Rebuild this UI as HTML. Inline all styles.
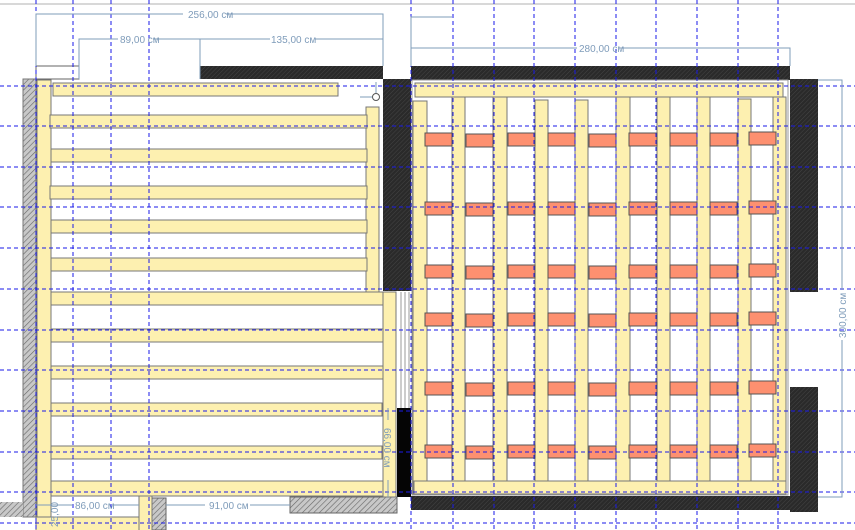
<!DOCTYPE html>
<html><head><meta charset="utf-8"><style>
html,body{margin:0;padding:0;background:#fff;width:855px;height:530px;overflow:hidden}
svg{display:block}
text{font-family:"Liberation Sans",sans-serif;font-size:10px;fill:#7f9cba}
</style></head><body>
<svg width="855" height="530" viewBox="0 0 855 530">
<defs>
<pattern id="dk" width="3" height="3" patternUnits="userSpaceOnUse" patternTransform="rotate(45)"><rect width="3" height="3" fill="#2a2a2a"/><line x1="0" y1="0" x2="0" y2="3" stroke="#444" stroke-width="1"/></pattern>
<pattern id="gr" width="4" height="4" patternUnits="userSpaceOnUse" patternTransform="rotate(45)"><rect width="4" height="4" fill="#c8c8c8"/><line x1="0" y1="0" x2="0" y2="4" stroke="#666" stroke-width="1.2"/></pattern>
</defs>
<line x1="0" y1="4" x2="855" y2="4" stroke="#ccc" stroke-width="1.5"/>
<rect x="36" y="66" width="43" height="13" fill="#fff" stroke="#666"/>
<rect x="200" y="66" width="183" height="13" fill="url(#dk)"/>
<rect x="383" y="79" width="28" height="212" fill="url(#dk)"/>
<rect x="411" y="66" width="379" height="14" fill="url(#dk)"/>
<rect x="790" y="79" width="28" height="213" fill="url(#dk)"/>
<rect x="790" y="387" width="28" height="125" fill="url(#dk)"/>
<rect x="411" y="496" width="379" height="14" fill="url(#dk)"/>
<rect x="397" y="408" width="14" height="89" fill="#050505"/>
<rect x="23" y="79" width="13" height="438" fill="url(#gr)" stroke="#777"/>
<rect x="0" y="502" width="23" height="15" fill="url(#gr)"/>
<rect x="152" y="498" width="14" height="32" fill="url(#gr)" stroke="#666"/>
<rect x="290" y="497" width="107" height="16" fill="url(#gr)" stroke="#666"/>
<g fill="#fdf0b0" stroke="#777" stroke-width="1">
<rect x="37" y="80" width="14" height="437"/>
<rect x="36" y="517" width="103" height="14"/>
<rect x="139" y="495" width="13" height="36"/>
<rect x="53" y="83" width="285" height="13"/>
<rect x="366" y="107" width="13" height="185"/>
<rect x="50" y="115" width="317" height="13"/>
<rect x="51" y="149" width="316" height="13"/>
<rect x="50" y="186" width="317" height="13"/>
<rect x="51" y="220" width="316" height="13"/>
<rect x="51" y="258" width="316" height="13"/>
<rect x="51" y="292" width="332" height="13"/>
<rect x="51" y="329" width="332" height="13"/>
<rect x="51" y="366" width="332" height="13"/>
<rect x="51" y="403" width="331" height="13"/>
<rect x="51" y="446" width="331" height="13"/>
<rect x="51" y="481" width="332" height="15"/>
<rect x="383" y="292" width="13" height="205"/>
</g>
<line x1="401" y1="292" x2="401" y2="408" stroke="#999"/>
<line x1="405" y1="292" x2="405" y2="408" stroke="#999"/>
<line x1="409" y1="292" x2="409" y2="408" stroke="#999"/>
<rect x="412" y="80" width="376" height="415" fill="#fff" stroke="#999"/>
<g fill="#fdf0b0" stroke="#777">
<rect x="413" y="101" width="14" height="393"/>
<rect x="452" y="97" width="13" height="397"/>
<rect x="493" y="97" width="14" height="397"/>
<rect x="535" y="100" width="13" height="394"/>
<rect x="575" y="100" width="13" height="394"/>
<rect x="616" y="97" width="14" height="397"/>
<rect x="657" y="97" width="13" height="397"/>
<rect x="697" y="97" width="13" height="397"/>
<rect x="738" y="99" width="13" height="395"/>
<rect x="773" y="97" width="13" height="397"/>
<rect x="415" y="83" width="368" height="14"/>
<rect x="414" y="481" width="372" height="13"/>
</g>
<g fill="#fd9070" stroke="#555">
<g id="row">
<rect x="425" y="133" width="27" height="13"/><rect x="466" y="134" width="27" height="13"/><rect x="508" y="133" width="27" height="13"/><rect x="548" y="133" width="27" height="13"/><rect x="589" y="134" width="27" height="13"/><rect x="629" y="133" width="28" height="13"/><rect x="670" y="133" width="27" height="13"/><rect x="710" y="133" width="27" height="13"/><rect x="749" y="132" width="27" height="13"/>
</g>
<use href="#row" y="69"/><use href="#row" y="132"/><use href="#row" y="180"/><use href="#row" y="249"/><use href="#row" y="312"/>
</g>
<g stroke="#1a1ae8" stroke-width="1" stroke-dasharray="4,3">
<line x1="0" y1="86" x2="855" y2="86"/><line x1="0" y1="126" x2="855" y2="126"/><line x1="0" y1="167" x2="855" y2="167"/><line x1="0" y1="207" x2="855" y2="207"/><line x1="0" y1="248" x2="855" y2="248"/><line x1="0" y1="289" x2="855" y2="289"/><line x1="0" y1="330" x2="855" y2="330"/><line x1="0" y1="370" x2="855" y2="370"/><line x1="0" y1="411" x2="855" y2="411"/><line x1="0" y1="452" x2="855" y2="452"/><line x1="0" y1="492" x2="855" y2="492"/><line x1="0" y1="523" x2="855" y2="523"/>
<line x1="36" y1="0" x2="36" y2="530"/><line x1="73" y1="0" x2="73" y2="530"/><line x1="111" y1="0" x2="111" y2="530"/><line x1="149" y1="0" x2="149" y2="530"/><line x1="411" y1="0" x2="411" y2="530"/><line x1="453" y1="0" x2="453" y2="530"/><line x1="494" y1="0" x2="494" y2="530"/><line x1="534" y1="0" x2="534" y2="530"/><line x1="575" y1="0" x2="575" y2="530"/><line x1="616" y1="0" x2="616" y2="530"/><line x1="656" y1="0" x2="656" y2="530"/><line x1="697" y1="0" x2="697" y2="530"/><line x1="738" y1="0" x2="738" y2="530"/><line x1="778" y1="0" x2="778" y2="530"/>
</g>
<g stroke="#7f9cba" fill="none" stroke-width="1">
<path d="M36 66V14H183M226 14H383V66"/>
<path d="M79 79V39H118M153 39H200M200 79V39H270M315 39H383"/>
<path d="M411 66V17H452"/>
<path d="M411 48H577M620 48H790V66"/>
<path d="M818 80H842V290M842 340V497H818"/>
<path d="M36 505H73M113 505H139"/>
<path d="M166 505H205M250 505H290"/>
<path d="M388 408V420M388 480V497"/>
<circle cx="376" cy="97" r="3.5" fill="#fff" stroke="#555"/>
<path d="M360 97H372M376 82V93"/>
</g>
<text x="188" y="18">256,00 см</text>
<text x="120" y="43">89,00 см</text>
<text x="271" y="43">135,00 см</text>
<text x="579" y="52">280,00 см</text>
<text x="75" y="509">86,00 см</text>
<text x="209" y="509">91,00 см</text>
<text transform="translate(846,338) rotate(-90)">300,00 см</text>
<text transform="translate(384,428) rotate(90)">66,00 см</text>
<text transform="translate(58,527) rotate(-90)">25,00</text>
</svg>
</body></html>
